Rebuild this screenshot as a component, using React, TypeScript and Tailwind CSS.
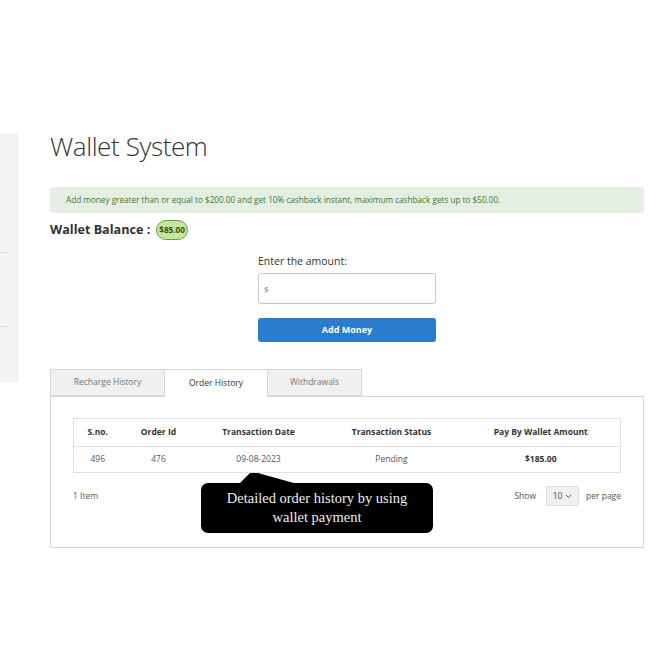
import React from "react";

const font = { fontFamily: '"Open Sans", "Liberation Sans", sans-serif' };

export default function App() {
  return (
    <div className="w-[670px] h-[670px] bg-white flex text-[#333]" style={font}>
      {/* sidebar */}
      <div className="w-[18px] mt-[133px] h-[249px] bg-[#f4f4f4] border-r border-[#e8e8e8] flex flex-col">
        <div className="h-[119px]" />
        <div className="w-[7px] h-px bg-[#dcdcdc]" />
        <div className="h-[73px]" />
        <div className="w-[7px] h-px bg-[#dcdcdc]" />
      </div>

      {/* main */}
      <div className="ml-[32px] w-[594px] pt-[128px] flex flex-col">
        <h1 className="h-[37px] text-[26px] leading-[37px] font-light text-[#333] tracking-[-0.4px]">Wallet System</h1>

        <div className="mt-[22px] h-[26px] rounded-[3px] bg-[#e4eee3] flex items-center pl-[16px] text-[8.2px] text-[#3f7a2c]">
          Add money greater than or equal to $200.00 and get 10% cashback instant, maximum cashback gets up to $50.00.
        </div>

        <div className="mt-[7px] h-[20px] flex items-center">
          <span className="text-[12.6px] font-bold text-[#333]">Wallet Balance :</span>
          <span className="ml-[6px] h-[20px] px-[2px] rounded-full bg-[#c6e59f] border border-[#6d9f3c] text-[8.2px] font-bold text-[#2e5212] flex items-center">
            $85.00
          </span>
        </div>

        <div className="ml-[208px] w-[178px] flex flex-col">
          <div className="mt-[13px] h-[16px] leading-[16px] text-[10.5px] text-[#333]">Enter the amount:</div>
          <div className="mt-[4px] h-[31px] border border-[#c8c8c8] rounded-[3px] flex items-center pl-[5px] text-[8px] text-[#777]">$</div>
          <button className="mt-[14px] h-[24px] rounded-[3px] bg-[#2b7bcf] text-white text-[9px] font-bold">Add Money</button>
        </div>

        {/* tabs */}
        <div className="mt-[27px] flex h-[27px]">
          <div className="w-[115px] h-[27px] bg-[#f0f0f0] border border-[#d8d8d8] flex items-center justify-center text-[8.5px] text-[#777]">Recharge History</div>
          <div className="w-[102px] h-[28px] bg-white border-t border-[#d8d8d8] flex items-center justify-center text-[8.5px] text-[#333] relative z-10">Order History</div>
          <div className="w-[95px] h-[27px] bg-[#f0f0f0] border border-[#d8d8d8] flex items-center justify-center text-[8.5px] text-[#777]">Withdrawals</div>
        </div>

        <div className="relative h-[152px] border border-[#d8d8d8] pt-[21px] px-[22px]">
          <table className="w-[548px] border border-[#e0e0e0] border-collapse text-[8.5px]">
            <thead>
              <tr className="h-[28px] border-b border-[#e0e0e0] font-bold text-[#333]">
                <th className="w-[48px] font-bold">S.no.</th>
                <th className="w-[74px] font-bold">Order Id</th>
                <th className="w-[126px] font-bold">Transaction Date</th>
                <th className="w-[140px] font-bold">Transaction Status</th>
                <th className="font-bold">Pay By Wallet Amount</th>
              </tr>
            </thead>
            <tbody>
              <tr className="h-[26px] text-center text-[#555]">
                <td>496</td>
                <td>476</td>
                <td>09-08-2023</td>
                <td>Pending</td>
                <td className="font-bold text-[#333]">$185.00</td>
              </tr>
            </tbody>
          </table>

          <div className="mt-[13px] h-[20px] flex items-center justify-between text-[8.5px] text-[#555]">
            <span>1 Item</span>
            <div className="flex items-center">
              <span>Show</span>
              <div className="ml-[10px] w-[33px] h-[20px] bg-[#f0f0f0] border border-[#dedede] rounded-[2px] flex items-center justify-center gap-[3px]">
                <span>10</span>
                <svg width="7" height="5" viewBox="0 0 7 5"><path d="M1 1l2.5 2.5L6 1" stroke="#555" strokeWidth="1" fill="none" /></svg>
              </div>
              <span className="ml-[7px]">per page</span>
            </div>
          </div>

          {/* callout */}
          <div className="absolute left-[150px] top-[76px] w-[250px] h-[61px]">
            <svg className="absolute left-0 top-0" width="250" height="12" viewBox="0 0 250 12">
              <polygon points="37,12 49,0 57,0 100,12" fill="#000" />
            </svg>
            <div className="absolute left-0 top-[10px] w-[232px] h-[50px] bg-black rounded-[7px] flex flex-col items-center justify-center text-[#eeeeee] text-[14.5px] leading-[19px]" style={{ fontFamily: '"Liberation Serif", "Times New Roman", serif' }}>
              <span>Detailed order history by using</span>
              <span>wallet payment</span>
            </div>
          </div>
        </div>
      </div>
    </div>
  );
}
